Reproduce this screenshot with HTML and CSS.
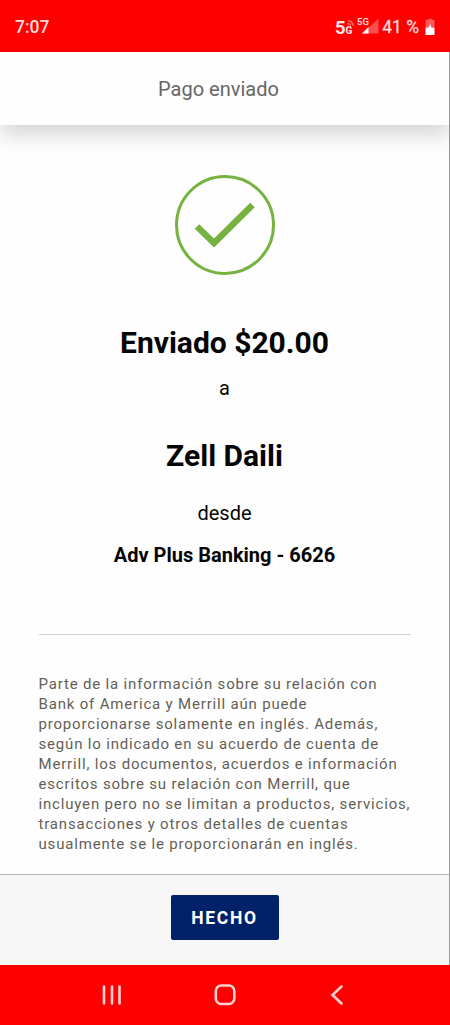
FILE: index.html
```html
<!DOCTYPE html>
<html lang="es">
	<head>
		<meta charset="utf-8">
		<title>Pago enviado</title>
		<link rel="stylesheet" href="styles.css">
	</head>
	<body>
		<div class="statusbar">
			<span class="hora">7:07</span>
			<svg class="iconos" width="46" height="24" viewBox="0 0 46 24">
				<text class="cinco" x="0" y="18.5">5</text>
				<text class="ge" x="10.5" y="18.5">G</text>
				<path d="M13 6q4.500 0 5.500 5M12 8.500q3 0 4 2" fill="none" stroke="#fff" stroke-width="1.500" opacity=".4"/>
				<path d="M43.500 3.500v15H27z" fill="#fff" opacity=".3"/>
				<path d="M33.500 12v6.500H27z" fill="#fff"/>
				<text class="mini" x="22" y="10">5G</text>
			</svg>
			<span class="carga">41 %</span>
			<svg class="bateria" width="10" height="18" viewBox="0 0 10 18">
				<path d="M2.500 2V1h5v1h2v7h-9V2z" fill="#fff" opacity=".35"/>
				<path d="M.5 9.500h3L5 6l1.500 3.500h3V17h-9z" fill="#fff"/>
			</svg>
		</div>

		<div class="titulo">Pago enviado</div>

		<div class="contenido">
			<svg class="check" width="102" height="102" viewBox="0 0 102 102">
				<circle cx="51" cy="51" r="48.500" fill="none" stroke="#76b23f" stroke-width="3"/>
				<path d="M23 52.500L40 69L78.500 31" fill="none" stroke="#76b23f" stroke-width="6.500"/>
			</svg>
			<h1 class="monto">Enviado $20.00</h1>
			<p class="a">a</p>
			<h1 class="nombre">Zell Daili</h1>
			<p class="desde">desde</p>
			<p class="cuenta">Adv Plus Banking - 6626</p>
			<p class="aviso">Parte de la información sobre su relación con<br>
			Bank of America y Merrill aún puede<br>
			proporcionarse solamente en inglés. Además,<br>
			según lo indicado en su acuerdo de cuenta de<br>
			Merrill, los documentos, acuerdos e información<br>
			escritos sobre su relación con Merrill, que<br>
			incluyen pero no se limitan a productos, servicios,<br>
			transacciones y otros detalles de cuentas<br>
			usualmente se le proporcionarán en inglés.</p>
		</div>

		<div class="pie">
			<button class="hecho">HECHO</button>
		</div>

		<div class="navegacion">
			<svg width="22" height="22" viewBox="0 0 22 22">
				<path d="M3 2.500v17M11 2.500v17M18.500 2.500v17"/>
			</svg>
			<svg width="22" height="22" viewBox="0 0 22 22">
				<rect x="1.800" y="1.500" width="18.500" height="18.500" rx="5.500"/>
			</svg>
			<svg width="22" height="22" viewBox="0 0 22 22">
				<path d="M14.500 2.500L5.500 11L14.500 19.500"/>
			</svg>
		</div>
	</body>
</html>
```

FILE: styles.css
```css
body { margin: 0; height: 1025px; display: flex; flex-direction: column; overflow: hidden; background-color: #fefefe; font-family: Roboto, "Liberation Sans", sans-serif; color: #050505;}
h1, p { margin: 0;}

/* barra de estado */
.statusbar { display: flex; align-items: center; height: 52px; flex-shrink: 0; padding: 2px 15px 0 15px; box-sizing: border-box; background-color: #fe0000; color: #ffdcdc; font-size: 18px;}
.hora { flex: 1; font-weight: 500; font-size: 17.5px;}
.carga { font-size: 17.5px; margin: 0 6px 0 1px; white-space: nowrap; -webkit-text-stroke: .3px #ffdcdc;}
.iconos text { fill: #ffe4e4; font-weight: bold;}
.cinco { font-size: 18.5px;}
.ge { font-size: 10px;}
.iconos .mini { font-size: 9.5px; font-weight: 500;}

/* titulo */
.titulo { position: relative; height: 73px; line-height: 75px; padding-right: 12px; border-right: 1px solid #999; background-color: #fefefe; text-align: center; font-size: 20px; color: #666; box-shadow: 0 10px 20px rgba(0,0,0,.16);}

/* contenido */
.contenido { flex: 1; display: flex; flex-direction: column; align-items: center; padding-top: 49px; border-right: 1px solid #999;}
.check { display: block;}
.monto { margin-top: 47px; font-size: 30px; line-height: 40px;}
.a { margin-top: 13px; font-size: 20px; line-height: 24px;}
.nombre { margin-top: 36px; font-size: 30px; line-height: 40px;}
.desde { margin-top: 25px; font-size: 20px; line-height: 24px;}
.cuenta { margin-top: 18px; font-size: 20px; line-height: 24px; font-weight: bold;}
.aviso { width: 372px; margin-top: 67px; padding-top: 39px; border-top: 1px solid #d0d0d0; font-size: 15px; line-height: 20px; letter-spacing: .82px; white-space: nowrap; color: #655f56;}

/* pie */
.pie { display: flex; justify-content: center; align-items: center; height: 91px; box-sizing: border-box; border-top: 1px solid #b4b4b4; border-right: 1px solid #999; background-color: #f7f7f7;}
.hecho { width: 108px; height: 45px; margin-top: -6px; padding: 1px 0 0 0; border: 0; border-radius: 2px; background-color: #012169; color: #fff; font: bold 17.5px Roboto, sans-serif; letter-spacing: 1.7px;}

/* botones del sistema */
.navegacion { display: flex; justify-content: center; align-items: center; gap: 91px; height: 60px; background-color: #fe0000;}
.navegacion svg { fill: none; stroke: #ffd0d0; stroke-width: 2.6; stroke-linecap: round;}
```
